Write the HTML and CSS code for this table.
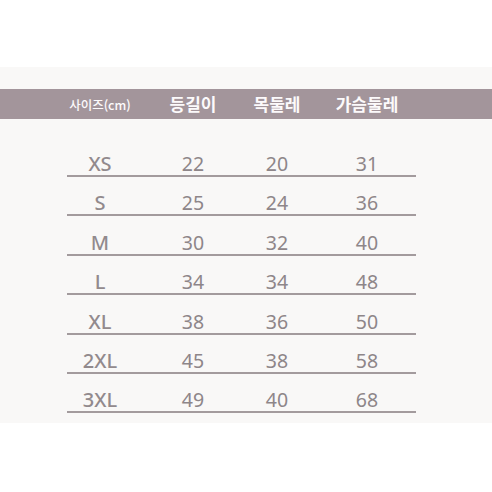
FILE: index.html
```html
<!DOCTYPE html>
<html lang="ko">
<head>
<meta charset="utf-8">
<link rel="stylesheet" href="styles.css">
</head>
<body>
<section class="panel">
  <div class="head">
    <div class="grid">
      <div class="cell small">사이즈(cm)</div>
      <div class="cell">등길이</div>
      <div class="cell">목둘레</div>
      <div class="cell last">가슴둘레</div>
    </div>
  </div>
  <div class="rows">
    <div class="grid row"><div class="cell size">XS</div><div class="cell">22</div><div class="cell">20</div><div class="cell last">31</div></div>
    <div class="grid row"><div class="cell size">S</div><div class="cell">25</div><div class="cell">24</div><div class="cell last">36</div></div>
    <div class="grid row"><div class="cell size">M</div><div class="cell">30</div><div class="cell">32</div><div class="cell last">40</div></div>
    <div class="grid row"><div class="cell size">L</div><div class="cell">34</div><div class="cell">34</div><div class="cell last">48</div></div>
    <div class="grid row"><div class="cell size">XL</div><div class="cell">38</div><div class="cell">36</div><div class="cell last">50</div></div>
    <div class="grid row"><div class="cell size">2XL</div><div class="cell">45</div><div class="cell">38</div><div class="cell last">58</div></div>
    <div class="grid row"><div class="cell size">3XL</div><div class="cell">49</div><div class="cell">40</div><div class="cell last">68</div></div>
  </div>
</section>
</body>
</html>
```
FILE: styles.css
```css
html, body {
  margin: 0;
  padding: 0;
  background: #ffffff;
}
body {
  width: 492px;
  height: 492px;
  overflow: hidden;
  font-family: "Noto Sans", "Noto Sans CJK KR", sans-serif;
}
.panel {
  margin-top: 67px;
  background: #f9f8f7;
  padding: 22px 0 10px;
}
.head {
  background: #a3959b;
  height: 30px;
  display: flex;
  align-items: center;
}
.grid {
  margin-left: 67px;
  width: 349px;
  display: grid;
  grid-template-columns: 66px 120px 48px 115px;
}
.cell {
  display: flex;
  justify-content: center;
  white-space: nowrap;
}
.cell.last {
  padding-left: 17px;
}
.head .cell {
  font-family: "Noto Sans CJK KR", sans-serif;
  font-weight: 700;
  font-size: 17px;
  line-height: 30px;
  color: #fcfafb;
}
.head .cell.small {
  font-size: 12.5px;
  font-weight: 500;
  padding-top: 1px;
}
.rows {
  padding-top: 18.6px;
}
.row {
  box-sizing: border-box;
  height: 39.4px;
  border-bottom: 2px solid #a39b9d;
  align-items: end;
}
.row .cell {
  font-size: 19.5px;
  line-height: 22px;
  color: #8e8689;
}
.row .cell.size {
  font-weight: 500;
  font-size: 20px;
  color: #928a8d;
}
```
